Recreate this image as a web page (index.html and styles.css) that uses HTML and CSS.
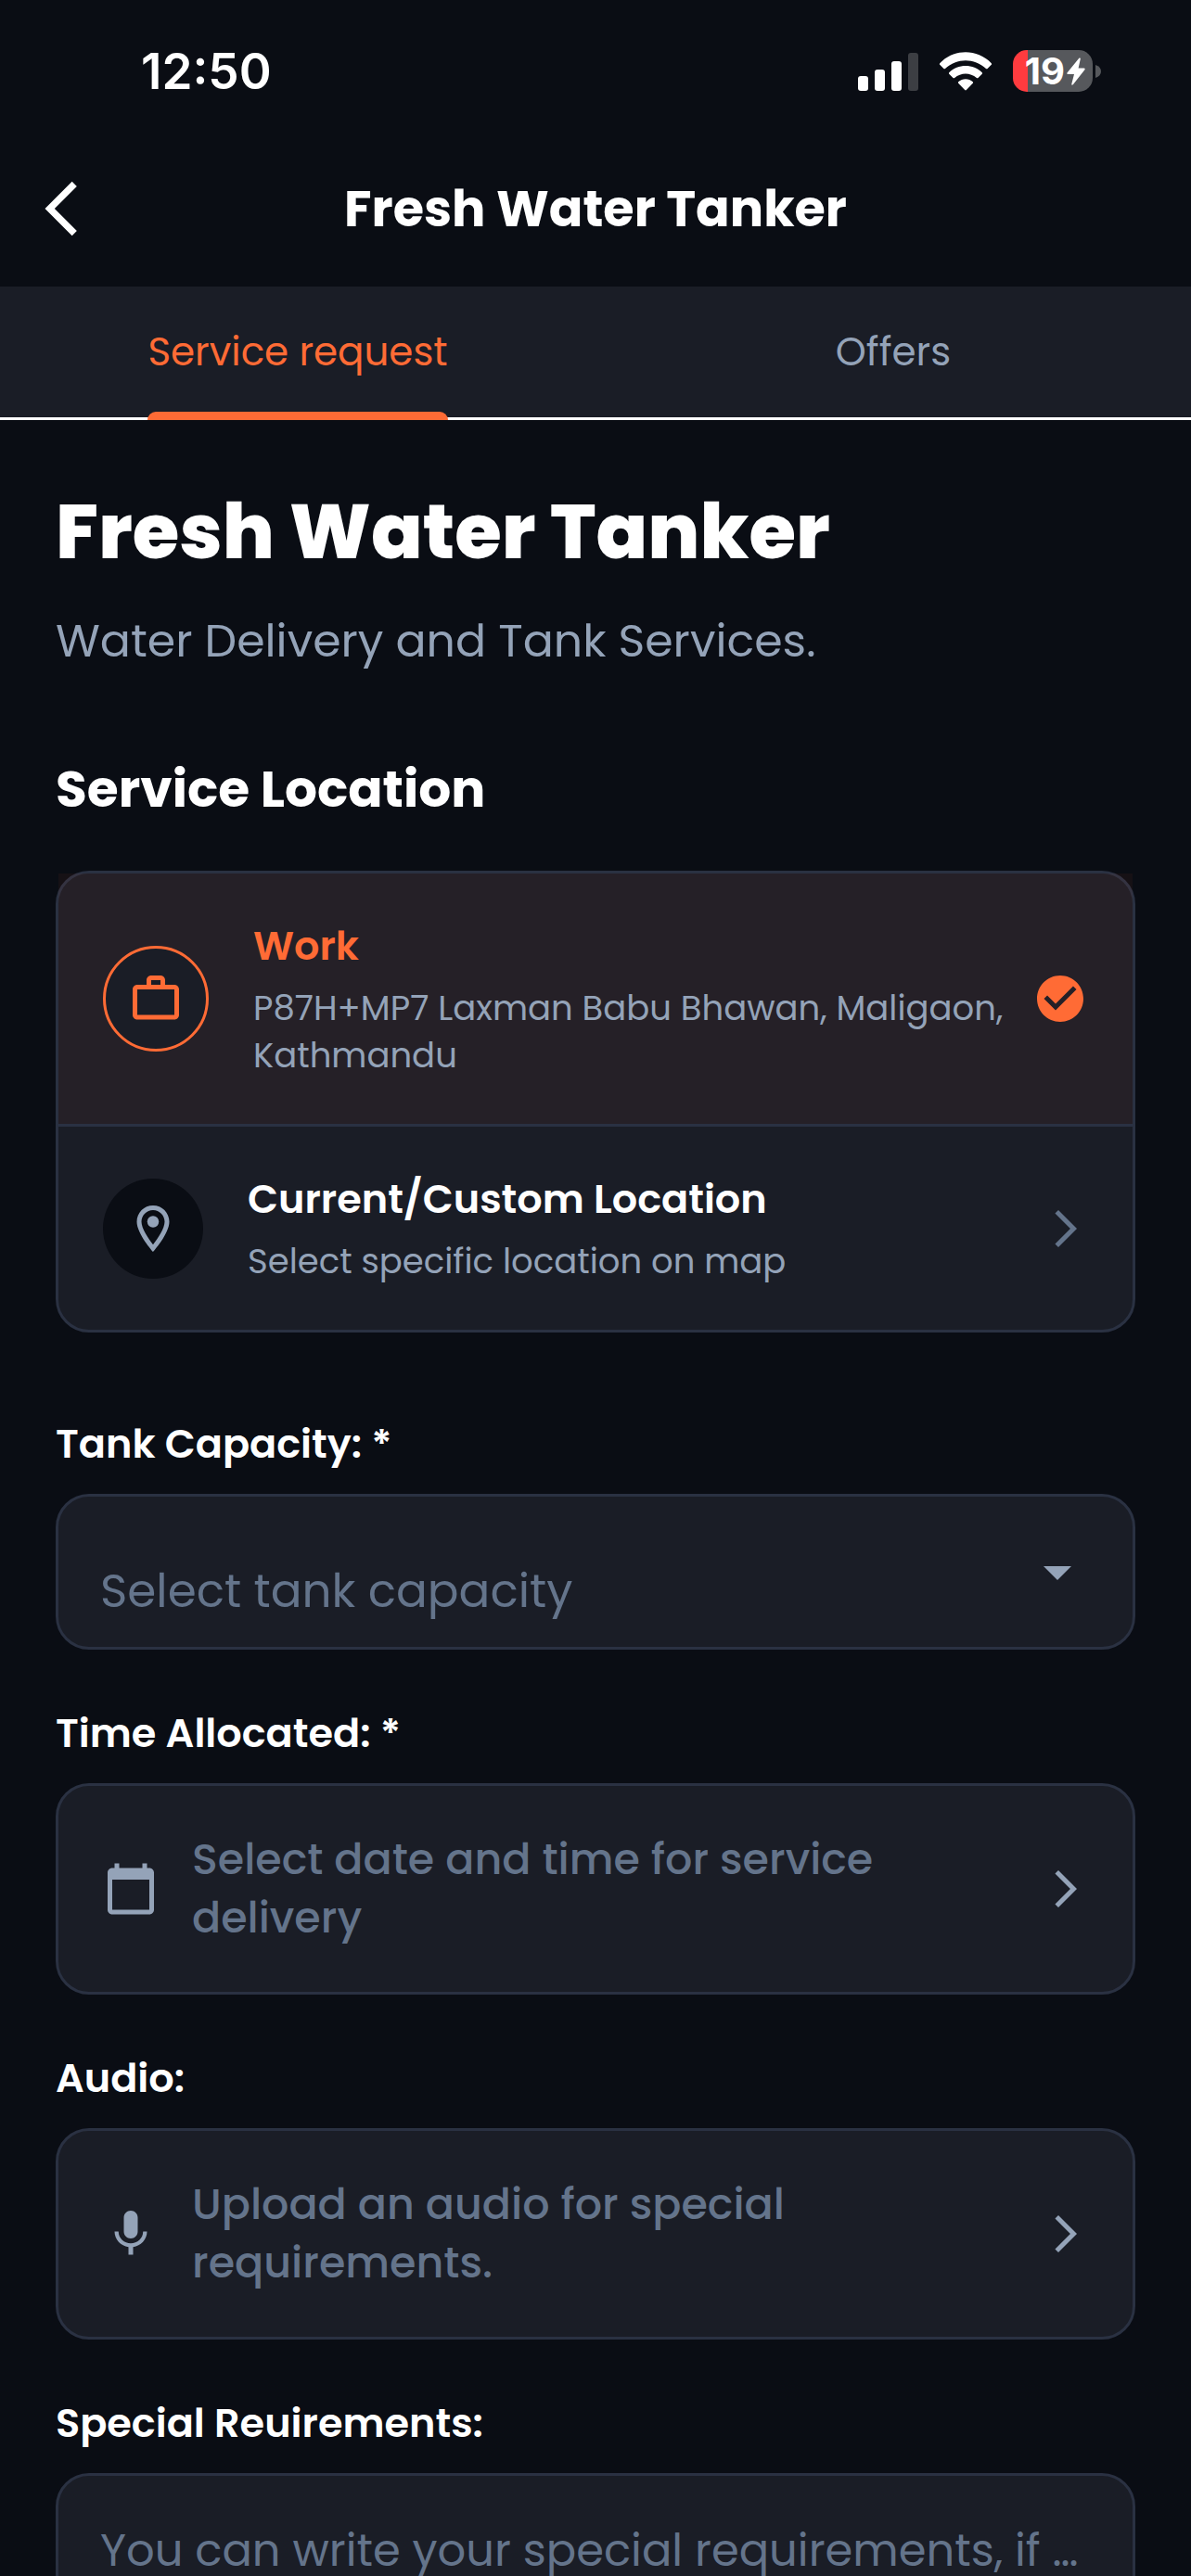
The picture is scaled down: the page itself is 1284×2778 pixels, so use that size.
FILE: index.html
```
<!DOCTYPE html>
<html lang="en">
  <head>
    <meta charset="UTF-8" />
    <meta name="viewport" content="width=device-width, initial-scale=1.0" />
    <title>Fresh Water Tanker</title>
    <link rel="stylesheet" href="styles.css">
  </head>
  <body>
    <div class="status-bar">
      <span class="time">12:50</span>
      <div class="status-icons">
        <svg class="signal" viewBox="0 0 65 42" aria-hidden="true">
          <rect x="0" y="26" width="11" height="16" rx="3" />
          <rect x="18" y="19" width="11" height="23" rx="3" />
          <rect x="36" y="10" width="11" height="32" rx="3" />
          <rect class="off" x="54" y="1" width="11" height="41" rx="3" />
        </svg>
        <svg class="wifi" viewBox="0 0 58 42" aria-hidden="true">
          <path d="M1.2 12.2C16.5-3.6 41.5-3.6 56.8 12.2Q57.5 13 56.8 13.8L52.6 18Q51.8 18.7 51 18C38.5 6.2 19.5 6.2 7 18Q6.2 18.7 5.4 18L1.2 13.8Q.5 13 1.2 12.2Z" />
          <path d="M11.2 22.2C21 12.7 37 12.7 46.8 22.2Q47.5 23 46.8 23.8L42.5 28Q41.7 28.7 40.9 28C34 22 24 22 17.1 28Q16.3 28.7 15.5 28L11.2 23.8Q10.5 23 11.2 22.2Z" />
          <path d="M21.2 32.3C25.5 28.2 32.5 28.2 36.8 32.3Q37.5 33 36.8 33.8L29.8 41Q29 41.8 28.2 41L21.2 33.8Q20.5 33 21.2 32.3Z" />
        </svg>
        <div class="battery">
          <div class="battery-body">
            <span>19</span>
            <svg class="bolt" viewBox="0 0 20 30" aria-hidden="true">
              <path d="M13.5.5Q15 0 14.8 1.5L12.6 11.5H18.5Q20.5 11.8 19.2 13.5L7 29Q5.2 30.5 5.3 28.5L8 18H1.5Q-.5 17.8.7 16.2Z" />
            </svg>
          </div>
          <svg class="battery-tip" viewBox="0 0 6 14" aria-hidden="true">
            <path d="M0 0Q6 2 6 7T0 14Z" />
          </svg>
        </div>
      </div>
    </div>

    <header class="app-bar">
      <button class="back" type="button" aria-label="Back">
        <svg viewBox="0 0 24 24"><path d="M17.77 3.77L16 2 6 12l10 10 1.77-1.77L9.54 12z" /></svg>
      </button>
      <div class="app-title">Fresh Water Tanker</div>
    </header>

    <nav class="tabs">
      <button class="tab active" type="button"><span>Service request</span></button>
      <button class="tab" type="button"><span>Offers</span></button>
    </nav>

    <main>
      <h1>Fresh Water Tanker</h1>
      <p class="subtitle">Water Delivery and Tank Services.</p>

      <h2>Service Location</h2>
      <div class="locations">
        <button class="location selected" type="button">
          <span class="location-icon">
            <svg class="icon" viewBox="0 0 24 24"><path d="M14 6V4h-4v2h4zM4 8v11h16V8H4zm16-2c1.11 0 2 .89 2 2v11c0 1.11-.89 2-2 2H4c-1.11 0-2-.89-2-2l.01-11c0-1.11.88-2 1.99-2h4V4c0-1.11.89-2 2-2h4c1.11 0 2 .89 2 2v2h4z" /></svg>
          </span>
          <span class="location-text">
            <span class="location-name">Work</span>
            <span class="location-address">P87H+MP7 Laxman Babu Bhawan, Maligaon, Kathmandu</span>
          </span>
          <svg class="icon" viewBox="0 0 24 24"><path d="M12 2C6.48 2 2 6.48 2 12s4.48 10 10 10 10-4.48 10-10S17.52 2 12 2zm-2 15l-5-5 1.41-1.41L10 14.17l7.59-7.59L19 8l-9 9z" /></svg>
        </button>
        <button class="location" type="button">
          <span class="location-icon">
            <svg class="icon" viewBox="0 0 24 24"><path d="M12 2C8.13 2 5 5.13 5 9c0 5.25 7 13 7 13s7-7.75 7-13c0-3.87-3.13-7-7-7zM7 9c0-2.76 2.24-5 5-5s5 2.24 5 5c0 2.88-2.88 7.19-5 9.88C9.92 16.21 7 11.85 7 9z" /><circle cx="12" cy="9" r="2.5" /></svg>
          </span>
          <span class="location-text">
            <span class="location-name">Current/Custom Location</span>
            <span class="location-address">Select specific location on map</span>
          </span>
          <svg class="chevron" viewBox="0 0 24 24"><path d="M6.23 20.23L8 22l10-10L8 2 6.23 3.77 14.46 12z" /></svg>
        </button>
      </div>

      <form class="request-form">
        <div class="field">
          <label for="capacity">Tank Capacity: *</label>
          <div class="select-box">
            <select id="capacity" required>
              <option value="">Select tank capacity</option>
            </select>
            <svg class="caret" viewBox="0 0 24 24"><path d="M7 10l5 5 5-5z" /></svg>
          </div>
        </div>

        <div class="field">
          <label for="schedule">Time Allocated: *</label>
          <button class="picker" id="schedule" type="button">
            <svg class="icon" viewBox="0 0 24 24"><path d="M20 3h-1V1h-2v2H7V1H5v2H4c-1.1 0-2 .9-2 2v16c0 1.1.9 2 2 2h16c1.1 0 2-.9 2-2V5c0-1.1-.9-2-2-2zm0 18H4V8h16v13z" /></svg>
            <span class="picker-text">Select date and time for service delivery</span>
            <svg class="chevron" viewBox="0 0 24 24"><path d="M6.23 20.23L8 22l10-10L8 2 6.23 3.77 14.46 12z" /></svg>
          </button>
        </div>

        <div class="field">
          <label for="audio">Audio:</label>
          <button class="picker" id="audio" type="button">
            <svg class="icon" viewBox="0 0 24 24"><path d="M12 14c1.66 0 2.99-1.34 2.99-3L15 5c0-1.66-1.34-3-3-3S9 3.34 9 5v6c0 1.66 1.34 3 3 3zm5.3-3c0 3-2.54 5.1-5.3 5.1S6.7 14 6.7 11H5c0 3.41 2.72 6.23 6 6.72V21h2v-3.28c3.28-.48 6-3.3 6-6.72h-1.7z" /></svg>
            <span class="picker-text">Upload an audio for special requirements.</span>
            <svg class="chevron" viewBox="0 0 24 24"><path d="M6.23 20.23L8 22l10-10L8 2 6.23 3.77 14.46 12z" /></svg>
          </button>
        </div>

        <div class="field">
          <label for="notes">Special Reuirements:</label>
          <textarea id="notes" rows="4" placeholder="You can write your special requirements, if …"></textarea>
        </div>
      </form>
    </main>
  </body>
</html>
```
FILE: styles.css
```
* {
  box-sizing: border-box;
}
body {
  margin: 0;
  background-color: #0a0d14;
  color: #fff;
  font-family: Poppins, Inter, sans-serif;
}
button,
select,
textarea {
  font-family: inherit;
  color: inherit;
}
button {
  margin: 0;
  padding: 0;
  border: none;
  background: none;
  cursor: pointer;
}
svg {
  display: block;
  flex: none;
  fill: currentColor;
}

/* status bar */
.status-bar {
  display: flex;
  justify-content: space-between;
  align-items: center;
  height: 141px;
  padding: 12px 97px 0 152px;
  font-family: Inter, sans-serif;
}
.time {
  font-size: 53px;
  font-weight: 600;
}
.status-icons {
  display: flex;
  align-items: center;
  gap: 22px;
}
.signal {
  width: 65px;
  height: 42px;
}
.signal .off {
  fill: #3c3e43;
}
.wifi {
  width: 58px;
  height: 42px;
}
.battery {
  display: flex;
  align-items: center;
  gap: 3px;
}
.battery-body {
  display: flex;
  align-items: center;
  justify-content: flex-end;
  gap: 2px;
  width: 86px;
  height: 45px;
  padding-right: 8px;
  border-radius: 15px;
  background: linear-gradient(to right, #ff3b3f 16px, #56585c 16px);
  font-size: 40px;
  font-weight: 700;
}
.bolt {
  width: 20px;
  height: 30px;
}
.battery-tip {
  width: 6px;
  height: 14px;
  color: #56585c;
}

/* app bar */
.app-bar {
  display: grid;
  grid-template-columns: 84px 1fr 84px;
  align-items: center;
  height: 168px;
  padding: 0 31px;
}
.back svg {
  width: 70px;
  height: 70px;
}
.app-title {
  font-size: 54px;
  font-weight: 700;
  text-align: center;
}

/* tabs */
.tabs {
  display: flex;
  height: 144px;
  background-color: #1a1d26;
  border-bottom: 3px solid #fff;
}
.tab {
  flex: 1;
  display: flex;
  justify-content: center;
  color: #94a3b8;
  font-size: 42px;
  font-weight: 400;
}
.tab span {
  position: relative;
  display: flex;
  align-items: center;
  height: 100%;
}
.tab.active {
  color: #ff6b35;
}
.tab.active span::after {
  content: "";
  position: absolute;
  left: 0;
  right: 0;
  bottom: -3px;
  height: 9px;
  border-radius: 9px 9px 0 0;
  background-color: #ff6b35;
}

main {
  padding: 66px 60px 60px;
}
h1 {
  margin: 0;
  font-size: 82px;
  font-weight: 800;
  line-height: 110px;
}
.subtitle {
  margin: 26px 0 84px;
  color: #94a3b8;
  font-size: 49px;
  font-weight: 400;
  line-height: 72px;
}
h2 {
  margin: 0 0 48px;
  font-size: 55px;
  font-weight: 700;
  line-height: 80px;
}

/* saved locations */
.locations {
  border: 3px solid #2a3142;
  border-radius: 36px;
  background-color: #1a1d26;
}
.location {
  display: flex;
  align-items: center;
  width: 100%;
  padding: 48px;
  text-align: left;
}
.location.selected {
  border-bottom: 3px solid #2a3142;
  background-color: rgba(255, 107, 53, 0.05);
  background-clip: padding-box;
}
.location-icon {
  display: flex;
  flex: none;
  align-items: center;
  justify-content: center;
  width: 108px;
  height: 108px;
  border-radius: 50%;
  background-color: #0a0d14;
  color: #94a3b8;
}
.selected .location-icon {
  width: 114px;
  height: 114px;
  border: 3px solid #ff6b35;
  background-color: #1a1d26;
}
.selected .icon {
  color: #ff6b35;
}
.location-text {
  display: flex;
  flex: 1;
  flex-direction: column;
  gap: 12px;
  margin-left: 48px;
}
.location-name {
  font-size: 43px;
  font-weight: 600;
  line-height: 60px;
}
.selected .location-name {
  color: #ff6b35;
}
.location-address {
  color: #94a3b8;
  font-size: 37px;
  font-weight: 400;
  line-height: 51px;
}
.icon {
  width: 60px;
  height: 60px;
}
.chevron {
  width: 48px;
  height: 48px;
}
.location .chevron {
  color: #64748b;
}

/* form */
.request-form {
  display: flex;
  flex-direction: column;
  gap: 60px;
  margin-top: 90px;
}
.field {
  display: flex;
  flex-direction: column;
  gap: 24px;
}
label {
  font-size: 43px;
  font-weight: 600;
  line-height: 60px;
}
select,
textarea,
.picker {
  width: 100%;
  border: 3px solid #2a3142;
  border-radius: 36px;
  background-color: #1a1d26;
  color: #64748b;
  text-align: left;
}
.select-box {
  display: grid;
  align-items: center;
}
.select-box select,
.caret {
  grid-area: 1 / 1;
}
select {
  appearance: none;
  height: 168px;
  padding: 40px 120px 0 45px;
  font-size: 50px;
  font-weight: 400;
}
.caret {
  justify-self: end;
  width: 72px;
  height: 72px;
  margin-right: 48px;
  color: #94a3b8;
  pointer-events: none;
}
.picker {
  display: flex;
  align-items: center;
  padding: 48px;
  color: #94a3b8;
}
.picker-text {
  flex: 1;
  margin: 0 96px 0 36px;
  color: #64748b;
  font-size: 46px;
  font-weight: 500;
  line-height: 63px;
}
textarea {
  display: block;
  padding: 48px 45px;
  font-size: 48px;
  font-weight: 400;
  line-height: 66px;
  resize: none;
}
textarea::placeholder {
  color: #64748b;
}
```
